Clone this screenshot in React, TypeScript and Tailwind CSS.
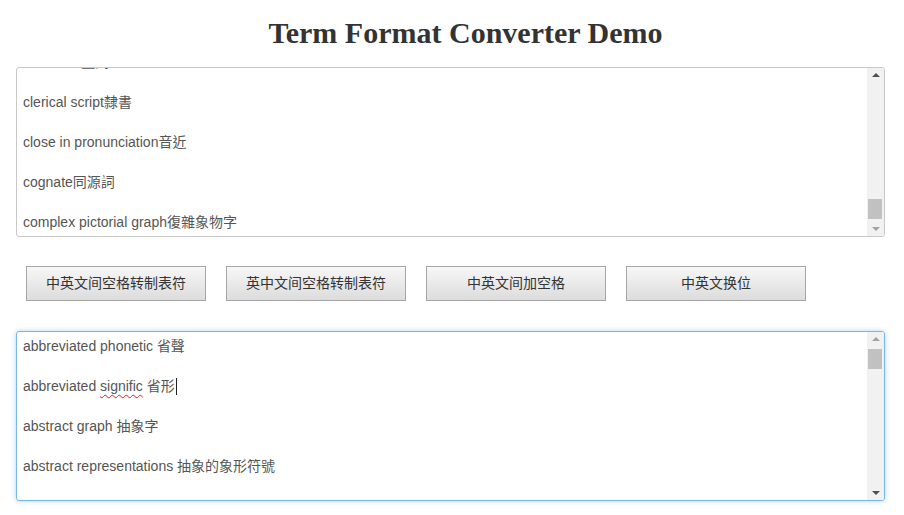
const topLines = [
  "classifier 量詞",
  "clerical script隸書",
  "close in pronunciation音近",
  "cognate同源詞",
  "complex pictorial graph復雜象物字",
];

const buttons = ["中英文间空格转制表符", "英中文间空格转制表符", "中英文间加空格", "中英文换位"];

const textFont = {
  fontFamily: '"Liberation Sans", "Noto Sans CJK TC", "Noto Sans CJK SC", sans-serif',
};

function Scrollbar({ thumbTop, upActive, downActive }: { thumbTop: number; upActive: boolean; downActive: boolean }) {
  return (
    <div className="absolute right-0 top-0 bottom-0 w-[17px] bg-[#f1f1f1]">
      {/* up arrow */}
      <div className="absolute left-0 top-[5px] flex w-[17px] justify-center">
        <div
          className={
            "h-0 w-0 border-x-[4px] border-b-[4px] border-x-transparent " +
            (upActive ? "border-b-[#505050]" : "border-b-[#a3a3a3]")
          }
        />
      </div>
      {/* thumb */}
      <div className="absolute left-[1px] w-[14px] h-[20px] bg-[#c1c1c1]" style={{ top: thumbTop }} />
      {/* down arrow */}
      <div className="absolute left-0 bottom-[5px] flex w-[17px] justify-center">
        <div
          className={
            "h-0 w-0 border-x-[4px] border-t-[4px] border-x-transparent " +
            (downActive ? "border-t-[#505050]" : "border-t-[#a3a3a3]")
          }
        />
      </div>
    </div>
  );
}

export default function App() {
  return (
    <div className="w-full bg-white px-[16px] pb-[15px]">
      <h1
        className="mt-[16px] pl-[27px] text-center text-[30px] font-bold leading-[34px] text-[#333]"
        style={{ fontFamily: '"Liberation Serif", serif' }}
      >
        Term Format Converter Demo
      </h1>

      {/* source box, scrolled to the end */}
      <div
        className="relative mt-[17px] h-[170px] w-[869px] overflow-hidden rounded-[3px] border border-[#c8c8c8] text-[14px] text-[#555]"
        style={textFont}
      >
        <div className="-mt-[16px] pl-[6px]">
          {topLines.map((line) => (
            <div key={line} className="mb-[20px] h-[20px] leading-[20px]">
              {line}
            </div>
          ))}
        </div>
        <Scrollbar thumbTop={131} upActive={true} downActive={false} />
      </div>

      {/* actions */}
      <div className="mt-[29px] flex gap-[20px] pl-[10px]">
        {buttons.map((b) => (
          <button
            key={b}
            className="h-[35px] w-[180px] border border-[#a6a6a6] bg-gradient-to-b from-[#f7f7f7] to-[#dcdcdc] pb-[2px] text-[14px] text-[#333]"
            style={{ fontFamily: '"Noto Sans CJK SC", sans-serif' }}
          >
            {b}
          </button>
        ))}
      </div>

      {/* result box, focused */}
      <div
        className="relative mt-[30px] h-[170px] w-[869px] overflow-hidden rounded-[3px] border border-[#7ab6e6] text-[14px] text-[#555] shadow-[0_0_5px_rgba(102,175,233,0.55)]"
        style={textFont}
      >
        <div className="pl-[6px] pt-[4px]">
          <div className="mb-[20px] h-[20px] leading-[20px]">abbreviated phonetic 省聲</div>
          <div className="mb-[20px] flex h-[20px] items-center leading-[20px]">
            <span>
              abbreviated{" "}
              <span className="underline decoration-wavy decoration-[#e02020] decoration-1 underline-offset-[3px]">
                signific
              </span>{" "}
              省形
            </span>
            <span className="ml-[1px] h-[17px] w-[1px] bg-[#222]" />
          </div>
          <div className="mb-[20px] h-[20px] leading-[20px]">abstract graph 抽象字</div>
          <div className="mb-[20px] h-[20px] leading-[20px]">abstract representations 抽象的象形符號</div>
        </div>
        <Scrollbar thumbTop={17} upActive={false} downActive={true} />
      </div>
    </div>
  );
}
